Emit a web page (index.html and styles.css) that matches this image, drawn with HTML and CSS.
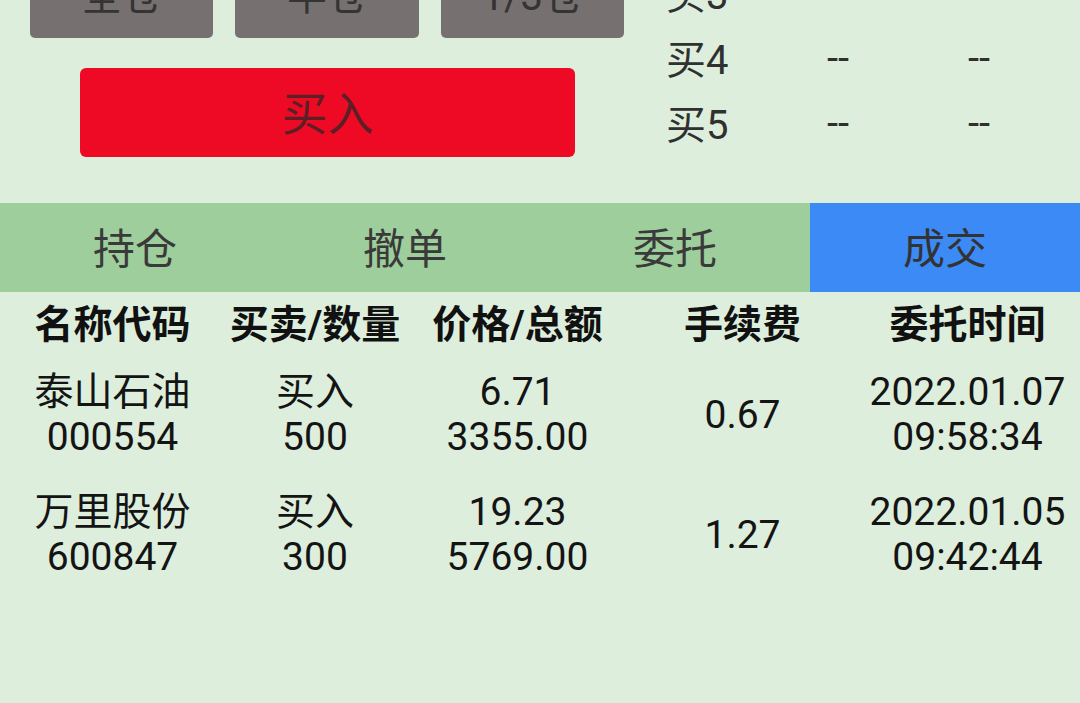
FILE: index.html
```html
<!DOCTYPE html>
<html lang="zh-CN">
<head>
<meta charset="utf-8">
<title>成交</title>
<link rel="stylesheet" href="styles.css">
</head>
<body>
<div class="top">
  <div class="left">
    <div class="pos-row">
      <div class="pos-btn">全仓</div>
      <div class="pos-btn">半仓</div>
      <div class="pos-btn">1/3仓</div>
    </div>
    <div class="buy-btn">买入</div>
  </div>
  <div class="book">
    <div class="lvl">买3</div><div class="val">--</div><div class="val">--</div>
    <div class="lvl">买4</div><div class="val">--</div><div class="val">--</div>
    <div class="lvl">买5</div><div class="val">--</div><div class="val">--</div>
  </div>
</div>
<div class="tabs">
  <div class="tab">持仓</div>
  <div class="tab">撤单</div>
  <div class="tab">委托</div>
  <div class="tab active">成交</div>
</div>
<div class="table">
  <div class="th">名称代码</div>
  <div class="th">买卖/数量</div>
  <div class="th">价格/总额</div>
  <div class="th">手续费</div>
  <div class="th">委托时间</div>

  <div class="td">泰山石油<br>000554</div>
  <div class="td">买入<br>500</div>
  <div class="td">6.71<br>3355.00</div>
  <div class="td single">0.67</div>
  <div class="td">2022.01.07<br>09:58:34</div>

  <div class="td">万里股份<br>600847</div>
  <div class="td">买入<br>300</div>
  <div class="td">19.23<br>5769.00</div>
  <div class="td single">1.27</div>
  <div class="td">2022.01.05<br>09:42:44</div>
</div>
</body>
</html>
```
FILE: styles.css
```css
html, body {
  margin: 0;
  padding: 0;
}
body {
  background: #ddeedc;
  font-family: Roboto, "Noto Sans CJK SC", sans-serif;
  color: #1a1a1a;
  overflow: hidden;
}
.top {
  display: flex;
  height: 203px;
}
.left {
  width: 645px;
  flex: none;
}
.pos-row {
  display: flex;
  gap: 22px;
  margin: -52px 0 0 30px;
  width: 594px;
}
.pos-btn {
  flex: 1;
  height: 90px;
  background: #767170;
  border-radius: 5px;
  display: flex;
  align-items: center;
  justify-content: center;
  font-size: 40px;
  color: #343434;
}
.buy-btn {
  margin: 30px 0 0 80px;
  width: 495px;
  height: 89px;
  box-sizing: border-box;
  padding-bottom: 5px;
  background: #ee0a24;
  border-radius: 6px;
  display: flex;
  align-items: center;
  justify-content: center;
  font-size: 46px;
  color: #5c1f26;
}
.book {
  margin: -41px 0 0 21px;
  display: grid;
  grid-template-columns: 161px 141px 80px;
  grid-auto-rows: 65px;
  align-items: center;
  font-size: 40px;
  color: #303030;
}
.val {
  padding-top: 4px;
}
.tabs {
  display: grid;
  grid-template-columns: repeat(4, 1fr);
  height: 89px;
  background: #9dce9b;
}
.tab {
  display: flex;
  align-items: center;
  justify-content: center;
  padding-bottom: 5px;
  font-size: 42px;
  color: #3a3a3a;
}
.tab.active {
  background: #3c8af5;
  color: #333;
}
.table {
  display: grid;
  grid-template-columns: 225px 180px 225px 225px 225px;
}
.th {
  height: 64px;
  line-height: 66px;
  text-align: center;
  font-size: 39px;
  font-weight: bold;
  color: #111;
}
.td {
  padding: 14px 0 16px;
  text-align: center;
  font-size: 39px;
  line-height: 45px;
  color: #141414;
}
.td.single {
  align-self: center;
}
```
